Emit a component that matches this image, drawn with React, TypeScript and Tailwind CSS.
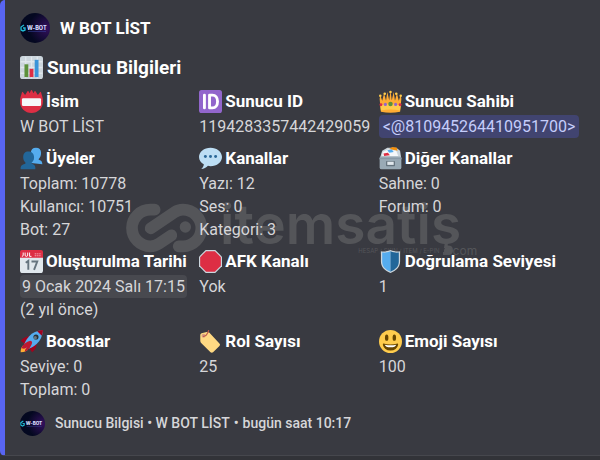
import type { ReactNode } from "react";

function Emoji({ label, children }: { label: string; children: ReactNode }) {
  return (
    <svg viewBox="0 0 36 36" role="img" aria-label={label} className="size-[23px] shrink-0">
      {children}
    </svg>
  );
}

function ChartIcon() {
  return (
    <Emoji label="bar chart">
      <rect width="36" height="36" rx="4" fill="#ccd6dd" />
      <path d="M9 1v34M18 1v34M27 1v34M1 9h34M1 18h34M1 27h34" stroke="#e1e8ed" strokeWidth="2" />
      <rect x="7" y="13" width="6" height="20" fill="#5c913b" />
      <rect x="15" y="20" width="6" height="13" fill="#dd2e44" />
      <rect x="23" y="6" width="6" height="27" fill="#3b94d9" />
    </Emoji>
  );
}

function BadgeIcon() {
  return (
    <Emoji label="name badge">
      <path d="M36 17.500C36 28 28 36 18 36S0 28 0 17.500C0 12 2 8 3 4c.3-1.500 1-1.500 2 0l3 4 3.500-5.500c.6-1 1.400-1 2 0L15 5l2-4.300c.5-1 1.500-1 2 0L21 5l1.500-2.500c.6-1 1.400-1 2 0L28 8l3-4c1-1.500 1.700-1.500 2 0 1 4 3 8 3 13.500z" fill="#dd2e44" />
      <rect x="3" y="13" width="30" height="12" rx="2" fill="#f5f8fa" />
    </Emoji>
  );
}

function IdIcon() {
  return (
    <Emoji label="id">
      <rect width="36" height="36" rx="4" fill="#9266cc" />
      <path d="M8.500 8v20" stroke="#fff" strokeWidth="4.500" strokeLinecap="round" />
      <path d="M16.500 8h4.500c5 0 8 4 8 10s-3 10-8 10h-4.500z" fill="none" stroke="#fff" strokeWidth="4.500" strokeLinejoin="round" />
    </Emoji>
  );
}

function CrownIcon() {
  return (
    <Emoji label="crown">
      <path d="M3 34 1 14l1-6 3 9 3-12 3 12 2-14 3 13 2-15 2 15 3-13 2 14 3-12 3 12 3-9 1 6-2 20q-15 3-30 0z" fill="#ffac33" />
      <path d="M2 24q16-4 32 0l-1 8q-15-3-30 0z" fill="#ffcc4d" />
      <circle cx="2" cy="9" r="2" fill="#ffcc4d" />
      <circle cx="34" cy="9" r="2" fill="#ffcc4d" />
      <circle cx="9" cy="6" r="2" fill="#ffcc4d" />
      <circle cx="27" cy="6" r="2" fill="#ffcc4d" />
      <circle cx="18" cy="3" r="2" fill="#ffcc4d" />
      <circle cx="18" cy="22" r="3.500" fill="#5c913b" />
      <circle cx="10" cy="22.500" r="2.500" fill="#9266cc" />
      <circle cx="26" cy="22.500" r="2.500" fill="#9266cc" />
      <circle cx="3" cy="23" r="2.300" fill="#dd2e44" />
      <circle cx="33" cy="23" r="2.300" fill="#dd2e44" />
    </Emoji>
  );
}

function MembersIcon() {
  return (
    <Emoji label="members">
      <path d="M17 25c0-4 3-4 4-6-3-3-4-6-4-10 0-5 3-8 8-8s8 3 8 8c0 4-1 7-4 10 1 2 6 1 6 8z" fill="#55acee" />
      <path d="M1 35c-1-9 7-7 8-10-3-3-4-6-4-9 0-6 3-9 8-9s9 3 9 9c0 3-1 6-4 9 1 3 7 1 6 10z" fill="#226699" />
    </Emoji>
  );
}

function SpeechIcon() {
  return (
    <Emoji label="speech bubble">
      <path d="M18 1C8 1 0 7.500 0 15.500c0 5 3 9 7.500 11.500 0 3-1.500 5-4 7.500 4 0 8-2 10.500-5l4 .5c10 0 18-6.500 18-14.500S28 1 18 1z" fill="#bddef4" />
      <circle cx="10" cy="15" r="2.300" fill="#2a6797" />
      <circle cx="18" cy="15" r="2.300" fill="#2a6797" />
      <circle cx="26" cy="15" r="2.300" fill="#2a6797" />
    </Emoji>
  );
}

function CardBoxIcon() {
  return (
    <Emoji label="card file box">
      <path d="M5 6 13 1h14l6 5 2 13H1z" fill="#ccd6dd" />
      <path d="m16 3 5-3 7 1 1 5z" fill="#f4900c" />
      <path d="m6 8 8-4 13 2 3 8H5z" fill="#f5f8fa" />
      <path d="m13 5 7-1 3 4-7 1z" fill="#55acee" />
      <path d="m7 10 7-1 3 4-9 1z" fill="#dd2e44" />
      <path d="M1 17q0-2 3-2h28q3 0 3 2v15q0 3-3 3H4q-3 0-3-3z" fill="#99aab5" />
      <path d="M1 18h34" stroke="#8899a6" strokeWidth="2" />
      <rect x="11" y="22" width="14" height="8" rx="1" fill="#66757f" />
      <rect x="13" y="23" width="10" height="5" fill="#e1e8ed" />
    </Emoji>
  );
}

function CalendarIcon() {
  return (
    <Emoji label="calendar">
      <path d="M0 10h36v22q0 4-4 4H4q-4 0-4-4z" fill="#e1e8ed" />
      <path d="M0 12V3q0-3 3-3h30q3 0 3 3v9z" fill="#dd2e44" />
      <path d="M5 4v4q0 2-2 2M8 4v4q0 2 2 2t2-2V4M15 4v6h3" fill="none" stroke="#fff" strokeWidth="1.500" />
      <path d="M23 6h10M23 9h10" stroke="#f4abba" strokeWidth="1.500" strokeDasharray="2 1" />
      <path d="m9 20 4-3v14M18 18h9l-5 13" fill="none" stroke="#66757f" strokeWidth="3" />
    </Emoji>
  );
}

function StopIcon() {
  return (
    <Emoji label="stop sign">
      <path d="M10.500 0h15L36 10.500v15L25.500 36h-15L0 25.500v-15z" fill="#ccd6dd" />
      <path d="M11.200 1.800h13.600l9.400 9.400v13.600l-9.400 9.400H11.200l-9.400-9.400V11.200z" fill="#dd2e44" />
    </Emoji>
  );
}

function ShieldIcon() {
  return (
    <Emoji label="shield">
      <path d="M18 0c5 2 10 3 15 2v16c0 9-6 14-15 18C9 32 3 27 3 18V2c5 1 10 0 15-2z" fill="#ccd6dd" />
      <path d="M18 2C13 4 9 4.500 5 4v14c0 8 5 12.500 13 16z" fill="#55acee" />
      <path d="M18 2c5 2 9 2.500 13 2v14c0 8-5 12.500-13 16z" fill="#226699" />
    </Emoji>
  );
}

function RocketIcon() {
  return (
    <Emoji label="rocket">
      <path d="M1 17q7-8 16-7l-8 13zM19 35q8-7 7-16l-13 8z" fill="#a0041e" />
      <path d="M1 35q0-10 6-12l6 6q-2 6-12 6z" fill="#ffac33" />
      <path d="M36 0q-14 1-22 10-7 8-8 15l5 5q7-1 15-8Q35 14 36 0z" fill="#55acee" />
      <path d="M36 0q-5 0-9 2l7 7q2-4 2-9z" fill="#a0041e" />
      <path d="M2 28q5-9 14-11 3 0 3 3-2 9-11 14-1-3 3-7-4 4-9 1z" fill="#be1931" />
      <circle cx="25" cy="11" r="4" fill="#292f33" />
      <circle cx="24" cy="12" r="2.500" fill="#66757f" />
    </Emoji>
  );
}

function LabelIcon() {
  return (
    <Emoji label="label">
      <path d="M2 17V8q0-2 2-3l8-2q2 0 4 1l16 17q2 2 0 4L22 35q-2 1-4 0L3 20q-1-1-1-3z" fill="#ffd983" />
      <circle cx="7" cy="9" r="3" fill="#d99e82" />
      <path d="M7 10q5 0 8-9" fill="none" stroke="#be5b4b" strokeWidth="2" strokeLinecap="round" />
    </Emoji>
  );
}

function SmileIcon() {
  return (
    <Emoji label="smiling face">
      <circle cx="18" cy="18" r="18" fill="#ffcc4d" />
      <ellipse cx="12" cy="12" rx="2.700" ry="5" fill="#664500" />
      <ellipse cx="24" cy="12" rx="2.700" ry="5" fill="#664500" />
      <path d="M7 21q11 3 22 0 1 0 1 2-2 9-12 9T6 23q0-2 1-2z" fill="#664500" />
      <path d="M9 23q9 2 18 0-1 4-9 4t-9-4z" fill="#fff" />
    </Emoji>
  );
}

function Avatar({ size }: { size: string }) {
  return (
    <svg viewBox="0 0 30 30" role="img" aria-label="W-BOT" className={`${size} shrink-0 rounded-full`}>
      <defs>
        <radialGradient id="glow" cx="0.9" cy="0.5" r="0.6">
          <stop offset="0" stopColor="#33105e" />
          <stop offset="1" stopColor="#040820" />
        </radialGradient>
      </defs>
      <rect width="30" height="30" fill="url(#glow)" />
      <path d="M4 12 1 14v3l2 1 2-1v-2H3" fill="none" stroke="#20b8d0" strokeWidth="1.400" />
      <text x="7" y="17" fontSize="5.500" fontWeight="800" fill="#d5dcff" className="font-['Inter',sans-serif]">W-BOT</text>
      <path d="M8 18.500h18" stroke="#3a49a8" strokeWidth="0.500" />
    </svg>
  );
}

function Watermark() {
  return (
    <div aria-hidden="true" className="pointer-events-none absolute top-[203px] left-[126px] flex items-start gap-3 font-['Inter',sans-serif] text-[#545559]">
      <svg viewBox="18 20 246 150" className="h-[50px] w-[82px] shrink-0">
        <g fill="none" stroke="currentColor" strokeWidth="35" strokeLinecap="round">
          <path d="M104 40H91A54 54 0 0 0 91 150Q105 150 117 142L154 117" />
          <path d="M176 150H189A54 54 0 0 0 189 40Q175 40 163 48L92 96" />
        </g>
        <circle cx="196" cy="92" r="17" fill="currentColor" />
      </svg>
      <div>
        <div className="text-[55px] leading-[42px] font-semibold">itemsatiş</div>
        <div className="-mr-4 flex items-center justify-end whitespace-nowrap">
          <span className="text-[6px] leading-3">HESAP / SKIN / ITEM / E-PIN</span>
          <span className="mr-px ml-1 size-2 rounded-full bg-[#545559]" />
          <span className="text-[12px] leading-3">com</span>
        </div>
      </div>
    </div>
  );
}

function Field({ icon, name, children }: { icon: ReactNode; name: string; children: ReactNode }) {
  return (
    <section className="min-w-0 whitespace-nowrap">
      <h3 className="flex h-[27px] items-center gap-[3px] text-[17px] font-bold text-white">
        {icon}
        {name}
      </h3>
      {children}
    </section>
  );
}

export default function App() {
  return (
    <main className="min-h-screen bg-[#323338] font-['Roboto','Noto_Sans',sans-serif] text-[16px] leading-[23px] text-[#d6d6d9]">
      <article className="relative isolate rounded-l-[5px] border-b border-l-[5px] border-b-[#46474d] border-l-[#5865f2] bg-[#393a41] pt-[13px] pr-[52px] pb-[19px] pl-[15px]">
        <header className="flex items-center gap-[10px] text-[17px] font-bold text-white">
          <Avatar size="size-[30px]" />
          <span>W BOT LİST</span>
        </header>
        <h2 className="mt-[11px] flex h-[27px] items-center gap-1 text-[19px] font-bold text-white">
          <ChartIcon />
          Sunucu Bilgileri
        </h2>
        <div className="relative z-10 mt-[7px] grid grid-cols-3 gap-x-[10px] gap-y-[7px]">
          <Field icon={<BadgeIcon />} name="İsim">
            <p>W BOT LİST</p>
          </Field>
          <Field icon={<IdIcon />} name="Sunucu ID">
            <p>1194283357442429059</p>
          </Field>
          <Field icon={<CrownIcon />} name="Sunucu Sahibi">
            <p><span className="rounded-[4px] bg-[#414470] px-1 py-[2px] text-[#c5cdfb]">&lt;@810945264410951700&gt;</span></p>
          </Field>
          <Field icon={<MembersIcon />} name="Üyeler">
            <p>Toplam: 10778</p>
            <p>Kullanıcı: 10751</p>
            <p>Bot: 27</p>
          </Field>
          <Field icon={<SpeechIcon />} name="Kanallar">
            <p>Yazı: 12</p>
            <p>Ses: 0</p>
            <p>Kategori: 3</p>
          </Field>
          <Field icon={<CardBoxIcon />} name="Diğer Kanallar">
            <p>Sahne: 0</p>
            <p>Forum: 0</p>
          </Field>
          <Field icon={<CalendarIcon />} name="Oluşturulma Tarihi">
            <p><time dateTime="2024-01-09T17:15" className="rounded-[4px] bg-[#48494f] px-[2px] py-[2px]">9 Ocak 2024 Salı 17:15</time></p>
            <p>(2 yıl önce)</p>
          </Field>
          <Field icon={<StopIcon />} name="AFK Kanalı">
            <p>Yok</p>
          </Field>
          <Field icon={<ShieldIcon />} name="Doğrulama Seviyesi">
            <p>1</p>
          </Field>
          <Field icon={<RocketIcon />} name="Boostlar">
            <p>Seviye: 0</p>
            <p>Toplam: 0</p>
          </Field>
          <Field icon={<LabelIcon />} name="Rol Sayısı">
            <p>25</p>
          </Field>
          <Field icon={<SmileIcon />} name="Emoji Sayısı">
            <p>100</p>
          </Field>
        </div>
        <footer className="mt-[10px] flex items-center gap-[10px] text-[14px] font-medium whitespace-nowrap">
          <Avatar size="size-[25px]" />
          <p>Sunucu Bilgisi • W BOT LİST<span className="px-1">•</span>bugün saat 10:17</p>
        </footer>
        <div className="absolute inset-0 -z-10 -ml-[5px]">
          <Watermark />
        </div>
      </article>
    </main>
  );
}
